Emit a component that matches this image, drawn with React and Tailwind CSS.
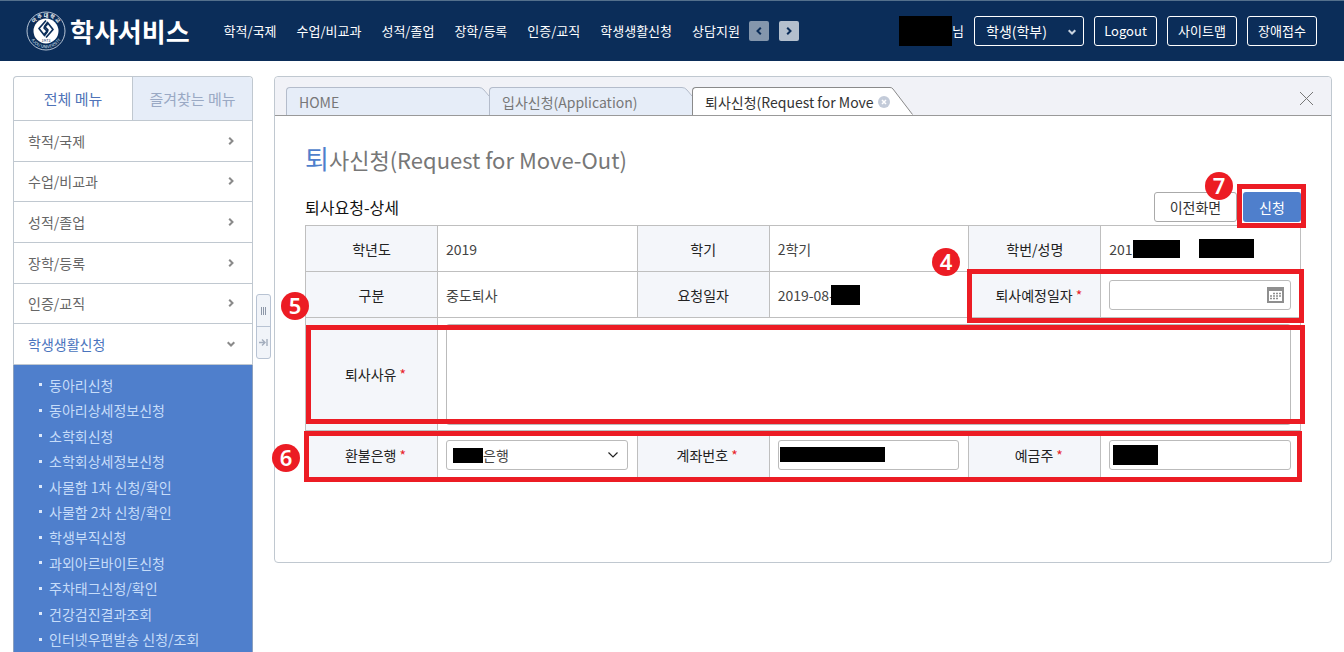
import React, { useState } from "react";

const topMenus = [
  "학적/국제",
  "수업/비교과",
  "성적/졸업",
  "장학/등록",
  "인증/교직",
  "학생생활신청",
  "상담지원",
];

const sideMenus = [
  "학적/국제",
  "수업/비교과",
  "성적/졸업",
  "장학/등록",
  "인증/교직",
  "학생생활신청",
];

const subMenus = [
  "동아리신청",
  "동아리상세정보신청",
  "소학회신청",
  "소학회상세정보신청",
  "사물함 1차 신청/확인",
  "사물함 2차 신청/확인",
  "학생부직신청",
  "과외아르바이트신청",
  "주차태그신청/확인",
  "건강검진결과조회",
  "인터넷우편발송 신청/조회",
];

// points right by default, rotate it for the other directions
const Chevron = ({ className = "" }) => (
  <svg
    viewBox="0 0 8 8"
    className={`h-2 w-2 ${className}`}
    fill="none"
    stroke="currentColor"
    strokeWidth="2"
  >
    <path d="M2.2 .7L5.5 4L2.2 7.3" />
  </svg>
);

const Seal = () => (
  <svg viewBox="0 0 40 40" className="h-10 w-10 shrink-0" aria-hidden="true">
    <circle cx="20" cy="20" r="19" fill="none" stroke="#dfe8f2" strokeWidth="0.8" />
    <defs>
      <path id="seal-top" d="M6 20a14 14 0 0 1 28 0" />
      <path id="seal-bottom" d="M2.8 20a17.2 17.2 0 0 0 34.4 0" />
    </defs>
    <text fill="#fff" fontSize="5" fontWeight="700">
      <textPath href="#seal-top" startOffset="50%" textAnchor="middle">
        아 주 대 학 교
      </textPath>
    </text>
    <text fill="#dfe8f2" fontSize="4.2">
      <textPath href="#seal-bottom" startOffset="50%" textAnchor="middle">
        AJOU UNIVERSITY
      </textPath>
    </text>
    <circle cx="20" cy="20" r="12.5" fill="#fff" />
    <g fill="none" stroke="#0b2d59" strokeWidth="1.7" strokeLinejoin="round">
      <path d="M20 9.5 13 17.5 18.5 24.5 21.5 20.5 18 17 21.5 13" />
      <path d="M20 26.5 27 18.5 21.5 11.5 18.5 15.5 22 19 18.5 23" />
    </g>
    <text x="20" y="31" fill="#0b2d59" fontSize="4" textAnchor="middle">
      1973
    </text>
  </svg>
);

const Header = () => (
  <header className="flex h-[61px] items-center border-t border-[#54708c] bg-[#0b2d59] pl-[26px] pr-[27px] text-[13px] text-white">
    <a href="#home" className="flex items-center gap-1">
      <Seal />
      <span className="whitespace-nowrap text-[26px] font-bold leading-none">학사서비스</span>
    </a>
    <nav className="ml-[34px] flex gap-5 whitespace-nowrap">
      {topMenus.map((menu) => (
        <a key={menu} href="#menu">
          {menu}
        </a>
      ))}
    </nav>
    <div className="ml-[9px] flex gap-[10px] text-[#0b2d59]">
      <button aria-label="이전 메뉴" className="flex h-5 w-5 items-center justify-center rounded-xs bg-[#8496ac]">
        <Chevron className="rotate-180" />
      </button>
      <button aria-label="다음 메뉴" className="flex h-5 w-5 items-center justify-center rounded-xs bg-[#b3bfcd]">
        <Chevron />
      </button>
    </div>
    <div className="ml-auto flex items-center gap-[10px] whitespace-nowrap">
      <span className="flex items-center">
        <span className="h-[30px] w-[53px] bg-black" />님
      </span>
      <div className="relative">
        <select
          aria-label="사용자 구분"
          className="h-[30px] w-[110px] appearance-none rounded-[3px] border border-white bg-[#0b2d59] pl-[11px] text-sm"
        >
          <option>학생(학부)</option>
        </select>
        <Chevron className="pointer-events-none absolute right-2 top-3 rotate-90 text-[#c9d3df]" />
      </div>
      <button className="h-[30px] w-[63px] rounded-[3px] border border-white">Logout</button>
      <button className="h-[30px] w-[70px] rounded-[3px] border border-white">사이트맵</button>
      <button className="h-[30px] w-[70px] rounded-[3px] border border-white">장애접수</button>
    </div>
  </header>
);

const Sidebar = () => {
  const [opened, setOpened] = useState("학생생활신청");

  return (
    <aside className="w-60 shrink-0 text-sm text-[#666]">
      <div className="flex h-11 rounded-t border border-b-0 border-[#c0c8d0] text-[15px]">
        <button className="w-[118px] text-[#4f73b8]">전체 메뉴</button>
        <button className="flex-1 rounded-tr border-l border-[#c0c8d0] bg-[#e6edf8] text-[#9aa9c4]">
          즐겨찾는 메뉴
        </button>
      </div>
      <ul className="grid h-[245px] auto-rows-fr border-x border-b border-[#c0c8d0]">
        {sideMenus.map((menu) => (
          <li key={menu} className="border-t border-[#c0c8d0]">
            <button
              onClick={() => setOpened(menu)}
              className={`flex h-full w-full items-center justify-between pl-[14px] pr-[17px] ${
                opened === menu ? "text-[#4a74bd]" : ""
              }`}
            >
              {menu}
              <Chevron className={`text-[#8a8a8a] ${opened === menu ? "rotate-90" : ""}`} />
            </button>
          </li>
        ))}
      </ul>
      <ul className="grid h-[295px] auto-rows-fr border-x border-[#8ba0bf] bg-[#4f7fcc] pb-2 pt-[7px] pl-[25px] text-[#c6dcf9]">
        {subMenus.map((menu) => (
          <li key={menu} className="flex items-center gap-[7px]">
            <span className="h-[3px] w-[3px] bg-[#dbe8fb]" />
            <a href="#sub">{menu}</a>
          </li>
        ))}
      </ul>
    </aside>
  );
};

const Splitter = () => (
  <div className="mx-[3px] mt-[218px] h-[65px] w-[15px] shrink-0 rounded-[3px] border border-[#b8c3d3] bg-[#f1f4f9]">
    <button aria-label="크기 조절" className="flex h-8 w-full items-center justify-center gap-px border-b border-[#b8c3d3]">
      <span className="h-2 w-px bg-[#8d97a8]" />
      <span className="h-2 w-px bg-[#8d97a8]" />
      <span className="h-2 w-px bg-[#8d97a8]" />
    </button>
    <button aria-label="메뉴 접기" className="flex h-[30px] w-full items-center justify-center">
      <svg viewBox="0 0 9 9" className="h-[9px] w-[9px]" fill="none" stroke="#a3adbd" strokeWidth="1.4">
        <path d="M0 4.5h6M3 1.5l3 3-3 3M8 1v7" />
      </svg>
    </button>
  </div>
);

const Tab = ({ children }) => (
  <div className="flex h-7 w-[203px]">
    <button className="flex-1 rounded-tl border-l border-t border-[#b4bccb] bg-[#e6edf8] pl-3 text-left text-[#777]">
      {children}
    </button>
    <svg viewBox="0 0 10 28" className="h-7 w-[10px]">
      <path d="M0 .5Q3 .5 5 3L10 9V28H0Z" fill="#e6edf8" />
      <path d="M0 .5Q3 .5 5 3L10 9" fill="none" stroke="#b4bccb" />
    </svg>
  </div>
);

const TabBar = () => (
  <div className="flex h-[39px] items-end rounded-t border-b border-[#999] bg-[#f1f2f7] pl-[11px] text-sm">
    <div className="flex flex-1 whitespace-nowrap">
      <Tab>HOME</Tab>
      <Tab>입사신청(Application)</Tab>
      <div className="-mb-px flex h-7">
        <div className="flex items-center gap-1 rounded-tl border-l border-t border-[#8a8a8a] bg-white pl-3">
          <button className="text-[#333]">퇴사신청(Request for Move</button>
          <button aria-label="탭 닫기" className="mt-px">
            <svg viewBox="0 0 12 12" className="h-3 w-3">
              <circle cx="6" cy="6" r="6" fill="#c3cbd9" />
              <path d="M4 4l4 4M8 4l-4 4" stroke="#fff" strokeWidth="1.5" />
            </svg>
          </button>
        </div>
        <svg viewBox="0 0 23 28" className="h-7 w-[23px]">
          <path d="M0 .5Q2 .5 3 2L22.5 28H0Z" fill="#fff" />
          <path d="M0 .5Q2 .5 3 2L22.5 27.5" fill="none" stroke="#8a8a8a" />
        </svg>
      </div>
    </div>
    <button aria-label="닫기" className="mb-[9px] mr-[17px]">
      <svg viewBox="0 0 15 15" className="h-[15px] w-[15px]" stroke="#777">
        <path d="M1 1l13 13M14 1L1 14" />
      </svg>
    </button>
  </div>
);

const Th = ({ children, htmlFor, required }) => (
  <th
    className={`border border-[#bfbfbf] bg-[#f4f6fa] text-center font-normal text-[#222] ${
      required ? "pl-2" : ""
    }`}
  >
    <label htmlFor={htmlFor}>{children}</label>
    {required && <span className="ml-[3px] text-[#e8232a]">*</span>}
  </th>
);

const Td = ({ children, colSpan }) => (
  <td colSpan={colSpan} className="border border-[#bfbfbf] pl-2 pr-[9px] text-[#444]">
    {children}
  </td>
);

const Marker = ({ n, className }) => (
  <span
    className={`absolute flex h-7 w-7 items-center justify-center rounded-full bg-[#ec1c24] pb-[2px] font-['Noto_Sans'] text-[22px] font-semibold leading-none text-white ${className}`}
  >
    {n}
  </span>
);

const fieldStyle = "block h-[30px] w-full rounded-[3px] border border-[#bbb] bg-white px-2";

const CalendarIcon = () => (
  <svg viewBox="0 0 17 16" className="h-4 w-[17px]">
    <rect x="1" y="1" width="15" height="14" fill="#fff" stroke="#8f8f8f" strokeWidth="2" />
    <path d="M0 2h17" stroke="#8f8f8f" strokeWidth="4" />
    <path
      d="M6 6.5h8M3 9h11M3 11.5h8"
      stroke="#8f8f8f"
      strokeWidth="1.5"
      strokeDasharray="2 1"
    />
  </svg>
);

const MoveOutForm = () => (
  <form className="px-[30px] pb-[83px] pt-[26px]" onSubmit={(e) => e.preventDefault()}>
    <h1 className="flex h-8 items-baseline text-[22px] leading-8 text-[#777]">
      <span className="text-[26px] text-[#4f7fcc]">퇴</span>사신청(Request for Move-Out)
    </h1>
    <div className="relative mt-[18px]">
      <div className="flex items-center justify-between pb-[3px]">
        <h2 className="text-base text-[#111]">퇴사요청-상세</h2>
        <div className="flex gap-[6px] text-sm">
          <button type="button" className="h-[30px] w-[83px] rounded-[3px] border border-[#aaa] bg-white text-[#333]">
            이전화면
          </button>
          <button type="submit" className="h-[30px] w-[58px] rounded-[3px] bg-[#4f7fcc] text-white">
            신청
          </button>
        </div>
      </div>
      <table className="w-full table-fixed border-collapse border-t border-[#888] text-sm">
        <colgroup>
          <col className="w-[132px]" />
          <col />
          <col className="w-[132px]" />
          <col />
          <col className="w-[132px]" />
          <col />
        </colgroup>
        <tbody>
          <tr className="h-[46px]">
            <Th>학년도</Th>
            <Td>2019</Td>
            <Th>학기</Th>
            <Td>2학기</Td>
            <Th>학번/성명</Th>
            <Td>
              <span className="flex items-center">
                201
                <span className="h-[18px] w-[47px] bg-black" />
                <span className="ml-[19px] h-[19px] w-[55px] bg-black" />
              </span>
            </Td>
          </tr>
          <tr className="h-[46px]">
            <Th>구분</Th>
            <Td>중도퇴사</Td>
            <Th>요청일자</Th>
            <Td>
              <span className="flex items-center">
                2019-08-
                <span className="-ml-[3px] h-5 w-[29px] bg-black" />
              </span>
            </Td>
            <Th htmlFor="moveDate" required>
              퇴사예정일자
            </Th>
            <Td>
              <div className="relative">
                <input id="moveDate" type="text" className={fieldStyle} />
                <button type="button" aria-label="날짜 선택" className="absolute right-[7px] top-[7px]">
                  <CalendarIcon />
                </button>
              </div>
            </Td>
          </tr>
          <tr className="h-[113px]">
            <Th htmlFor="reason" required>
              퇴사사유
            </Th>
            <Td colSpan={5}>
              <textarea
                id="reason"
                className="block h-[101px] w-full resize-none rounded-[3px] border border-[#bbb] bg-white p-2"
              />
            </Td>
          </tr>
          <tr className="h-[48px]">
            <Th htmlFor="bank" required>
              환불은행
            </Th>
            <Td>
              <div className="relative">
                <select
                  id="bank"
                  className="block h-[30px] w-full appearance-none rounded-[3px] border border-[#bbb] bg-white pl-9"
                >
                  <option>은행</option>
                </select>
                <span className="absolute left-[7px] top-2 h-[15px] w-[30px] bg-black" />
                <svg viewBox="0 0 10 6" className="pointer-events-none absolute right-[10px] top-3 h-[6px] w-[10px]">
                  <path d="M.5 .5L5 5L9.5 .5" fill="none" stroke="#222" strokeWidth="1.2" />
                </svg>
              </div>
            </Td>
            <Th htmlFor="account" required>
              계좌번호
            </Th>
            <Td>
              <div className="relative">
                <input id="account" type="text" className={fieldStyle} />
                <span className="absolute left-[2px] top-[7px] h-[15px] w-[105px] bg-black" />
              </div>
            </Td>
            <Th htmlFor="holder" required>
              예금주
            </Th>
            <Td>
              <div className="relative">
                <input id="holder" type="text" className={fieldStyle} />
                <span className="absolute left-1 top-[5px] h-5 w-[45px] bg-black" />
              </div>
            </Td>
          </tr>
        </tbody>
      </table>

      {/* step guides drawn over the form */}
      <div className="pointer-events-none absolute inset-0">
        <div className="absolute -right-[5px] -top-2 h-11 w-[69px] border-[5px] border-[#ec1c24]" />
        <div className="absolute -right-[3px] top-[77px] h-[54px] w-[337px] border-[5px] border-[#ec1c24]" />
        <div className="absolute -right-1 left-px top-[133px] h-[99px] border-[5px] border-[#ec1c24]" />
        <div className="absolute -left-px -right-px top-[239px] h-[51px] border-[5px] border-[#ec1c24]" />
        <Marker n={4} className="right-[341px] top-14" />
        <Marker n={5} className="-left-6 top-[100px]" />
        <Marker n={6} className="-left-[33px] top-[252px]" />
        <Marker n={7} className="right-[68px] -top-5" />
      </div>
    </div>
  </form>
);

const App = () => {
  return (
    <div className="h-screen overflow-hidden bg-white font-['Noto_Sans_CJK_KR',sans-serif]">
      <Header />
      <div className="flex items-start pl-[13px] pr-3 pt-[15px]">
        <Sidebar />
        <Splitter />
        <main className="min-w-0 flex-1 rounded border border-[#c0c8d0] bg-white">
          <TabBar />
          <MoveOutForm />
        </main>
      </div>
    </div>
  );
};

export default App;
